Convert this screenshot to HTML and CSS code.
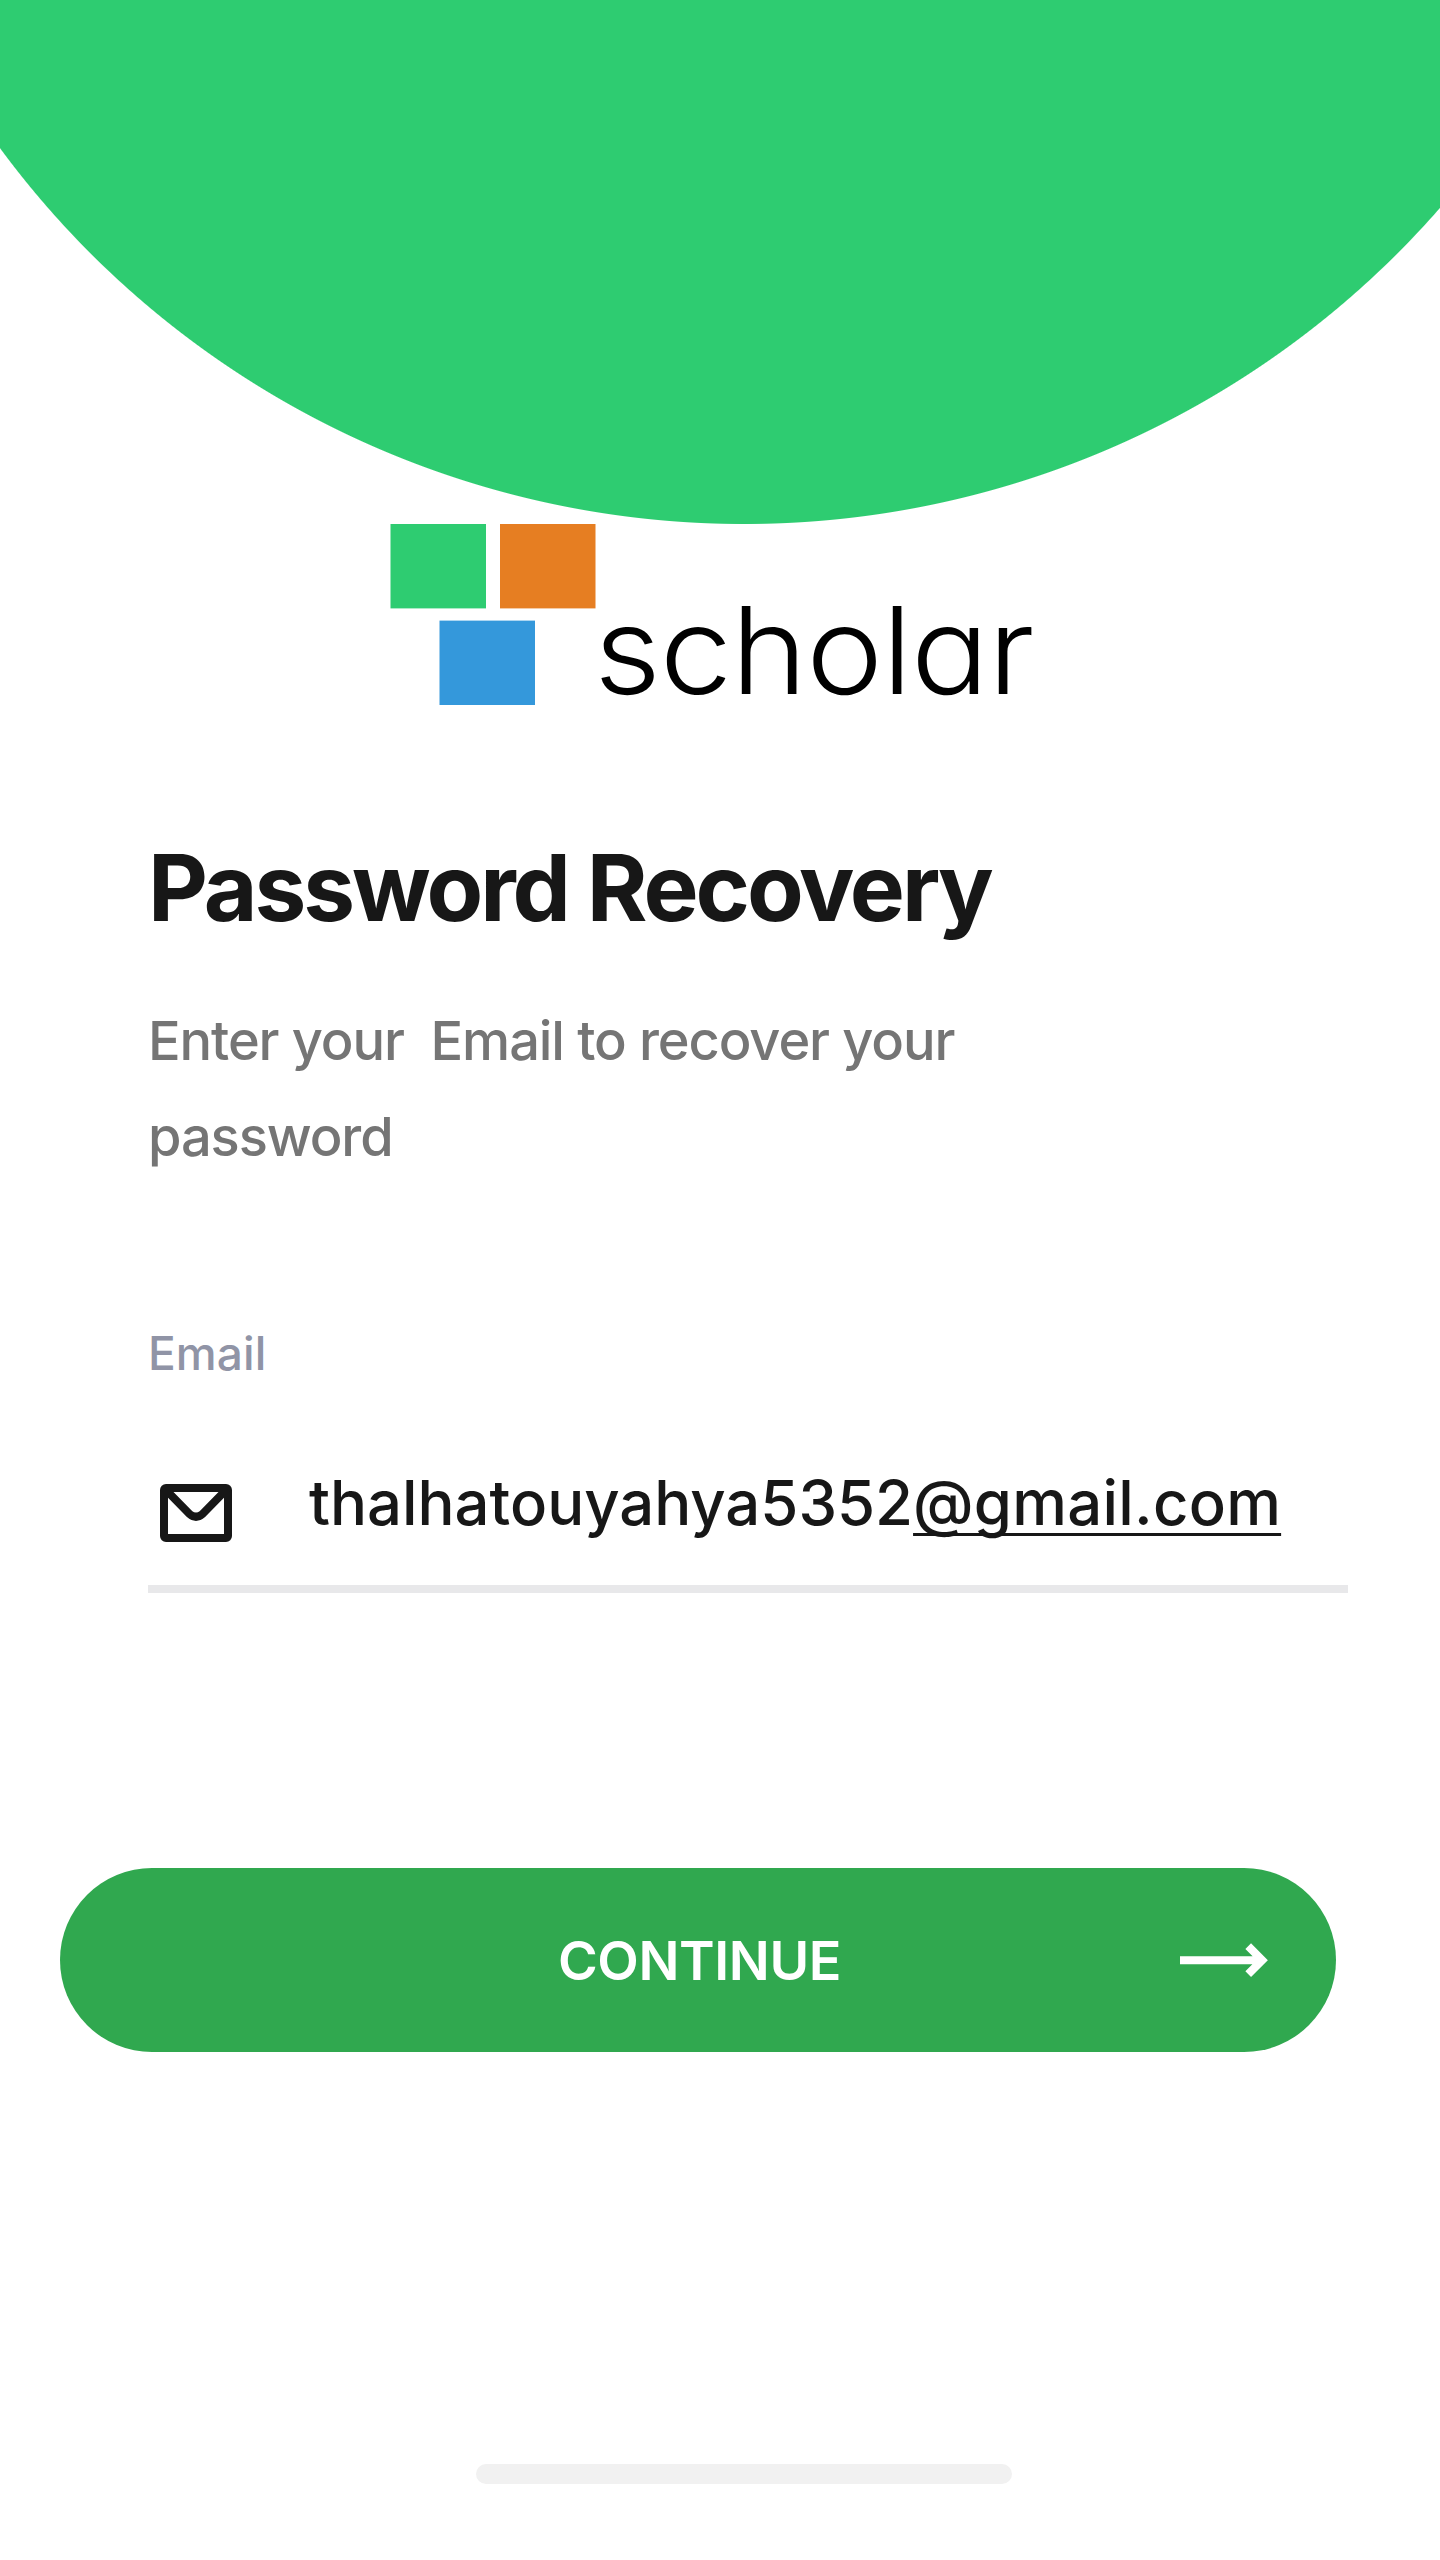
FILE: index.html
```html
<!DOCTYPE html>
<html lang="en">
<head>
<meta charset="utf-8">
<title>Password Recovery</title>
<link rel="stylesheet" href="styles.css">
</head>
<body>
<main class="screen">
  <header class="hero"></header>
  <div class="brand">
    <svg class="brand-mark" width="206" height="182" viewBox="0 0 206 182" aria-hidden="true">
      <rect x="0.5" y="0" width="95.5" height="84.4" fill="#2ecc71"/>
      <rect x="110" y="0" width="95.5" height="84.4" fill="#e67e22"/>
      <rect x="49.5" y="96.6" width="95.5" height="84.4" fill="#3498db"/>
    </svg>
    <span class="brand-name">scholar</span>
  </div>
  <section class="intro">
    <h1 class="title">Password Recovery</h1>
    <p class="subtitle">Enter your&nbsp; Email to recover your<br>password</p>
  </section>
  <form class="form">
    <label class="label">Email</label>
    <div class="field">
      <svg class="mail" width="72" height="58" viewBox="0 0 72 58" fill="none" stroke="#171717" stroke-width="8" stroke-linejoin="round" aria-hidden="true">
        <rect x="4" y="4" width="64" height="50" rx="2"/>
        <path d="M5 5L29.500 30Q36 35.500 42.500 30L67 5"/>
      </svg>
      <span class="value">thalhatouyahya5352<span class="domain">@gmail.com</span></span>
    </div>
    <button class="continue" type="button"><span>CONTINUE</span>
      <svg class="arrow" width="90" height="36" viewBox="0 0 90 36" fill="none" stroke="#fff" stroke-width="8" aria-hidden="true">
        <path d="M0 18.200H81M68.200 4.200L82.200 18.200L68.200 32.200"/>
      </svg>
    </button>
  </form>
  <div class="home-bar"></div>
</main>
</body>
</html>
```
FILE: styles.css
```css
* { box-sizing: border-box; }
body { margin: 0; background: #fff; font-family: Inter, "Liberation Sans", sans-serif; color: #171717; }
.screen { width: 1440px; height: 2560px; overflow: hidden; display: flex; flex-direction: column; }
.hero { flex: none; height: 524px; background: radial-gradient(circle at 744px -400.3px, #2ecc71 923.8px, #fff 924.8px); }
.brand { display: flex; height: 182px; padding-left: 390px; }
.brand-name { margin: 66px 0 0 -2px; font-size: 121px; line-height: 120px; font-weight: 320; letter-spacing: -1px; color: #000; white-space: nowrap; font-feature-settings: "cv11"; transform: scaleX(1.07); transform-origin: left; }
.intro { padding: 121px 0 0 148px; }
.title { margin: 0; font-size: 92.6px; line-height: 120px; font-weight: 650; letter-spacing: -3.05px; white-space: nowrap; }
.subtitle { margin: 45px 0 0; font-size: 54.2px; line-height: 96px; font-weight: 450; letter-spacing: -1.1px; color: #757575; white-space: nowrap; }
.form { display: flex; flex-direction: column; padding-top: 139px; }
.label { margin-left: 148px; font-size: 46px; line-height: 60px; letter-spacing: 0.1px; font-weight: 450; color: #9094a6; }
.field { display: flex; width: 1200px; height: 130px; margin: 80px 0 0 148px; padding-left: 12px; border-bottom: 8px solid #e8e8ea; }
.mail { margin-top: 21px; }
.value { margin-left: 77px; font-size: 61.6px; line-height: 80px; font-weight: 500; white-space: nowrap; }
.domain { letter-spacing: 0.25px; text-decoration: underline; text-decoration-thickness: 3px; text-underline-offset: 8px; text-decoration-skip-ink: none; }
.continue { position: relative; display: flex; align-items: center; justify-content: center; width: 1276px; height: 184px; margin: 275px 0 0 60px; padding: 0 0 0 3px; border: 0; border-radius: 92px; background: #30a84f; color: #fff; font: 600 54px Inter, "Liberation Sans", sans-serif; letter-spacing: -0.4px; }
.arrow { position: absolute; right: 66px; top: 74px; }
.home-bar { width: 536px; height: 20px; margin: 412px 0 0 476px; border-radius: 10px; background: #f1f1f1; }
```
